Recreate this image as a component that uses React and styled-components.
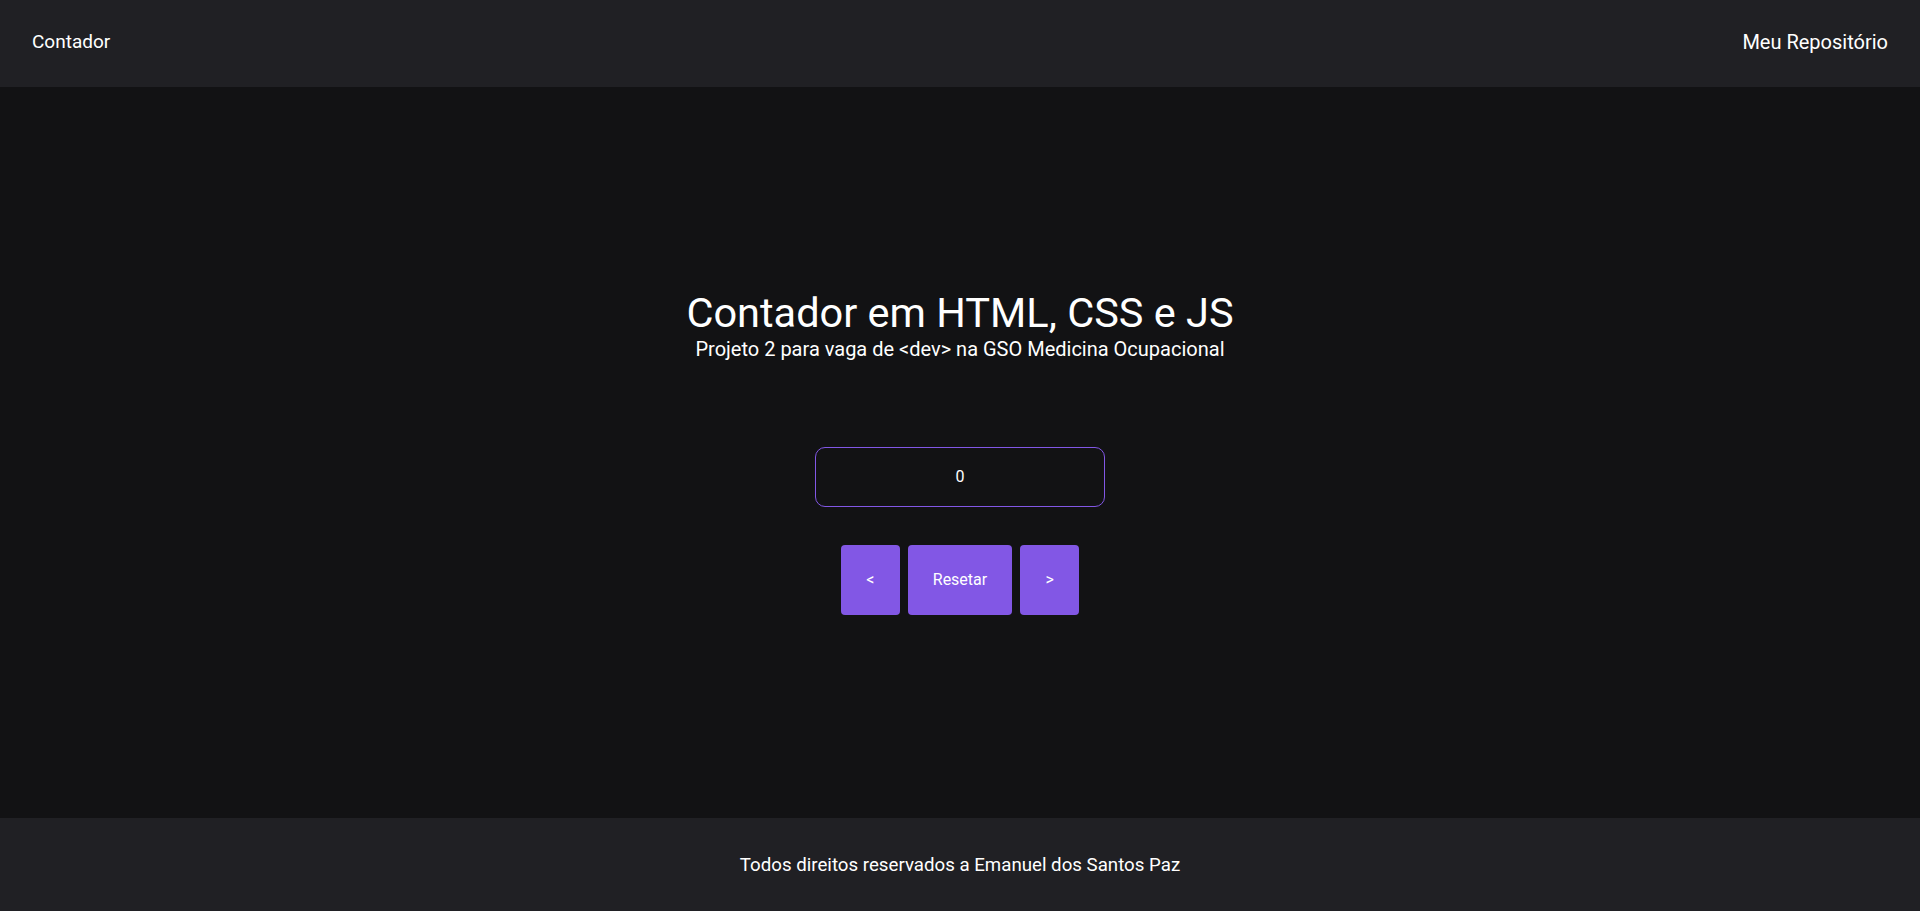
import React, { useState } from "react";
import styled, { createGlobalStyle } from "styled-components";

const GlobalStyle = createGlobalStyle`
  * { box-sizing: border-box; }
  html, body { margin: 0; padding: 0; }
  body {
    background: #121214;
    color: #ffffff;
    font-family: Roboto, "Liberation Sans", sans-serif;
  }
`;

const Page = styled.div`
  display: flex;
  flex-direction: column;
  min-height: 100vh;
`;

const Header = styled.header`
  height: 87px;
  background: #202024;
  display: flex;
  align-items: center;
  justify-content: space-between;
  padding: 0 32px 4px;
`;

const NavLink = styled.a`
  color: #ffffff;
  text-decoration: none;
  font-size: ${(p) => p.$size || "19px"};
`;

const Main = styled.main`
  flex: 1;
  display: flex;
  flex-direction: column;
  align-items: center;
  justify-content: center;
`;

const Title = styled.h1`
  margin: 0;
  font-size: 41.5px;
  font-weight: 400;
  line-height: 44px;
  text-align: center;
`;

const Subtitle = styled.p`
  margin: 3px 0 0;
  font-size: 20px;
  line-height: 23px;
  text-align: center;
`;

const CounterBox = styled.div`
  margin-top: 86px;
  width: 290px;
  height: 60px;
  border: 1px solid #8257e5;
  border-radius: 10px;
  display: flex;
  align-items: center;
  justify-content: center;
  font-size: 16px;
`;

const Controls = styled.div`
  margin-top: 38px;
  display: flex;
  gap: 8px;
`;

const Button = styled.button`
  height: 70px;
  min-width: 59px;
  padding: 0 25px;
  background: #8257e5;
  color: #ffffff;
  border: none;
  border-radius: 4px;
  font-family: Roboto, "Liberation Sans", sans-serif;
  font-size: 16px;
  cursor: pointer;
`;

const Footer = styled.footer`
  height: 93px;
  background: #202024;
  display: flex;
  align-items: center;
  justify-content: center;
  font-size: 18.7px;
`;

export default function App() {
  const [count, setCount] = useState(0);
  return (
    <>
      <GlobalStyle />
      <Page>
        <Header>
          <NavLink href="#">Contador</NavLink>
          <NavLink href="#" $size="20px">Meu Repositório</NavLink>
        </Header>
        <Main>
          <Title>Contador em HTML, CSS e JS</Title>
          <Subtitle>Projeto 2 para vaga de &lt;dev&gt; na GSO Medicina Ocupacional</Subtitle>
          <CounterBox>{count}</CounterBox>
          <Controls>
            <Button onClick={() => setCount((c) => c - 1)}>&lt;</Button>
            <Button onClick={() => setCount(0)}>Resetar</Button>
            <Button onClick={() => setCount((c) => c + 1)}>&gt;</Button>
          </Controls>
        </Main>
        <Footer>Todos direitos reservados a Emanuel dos Santos Paz</Footer>
      </Page>
    </>
  );
}
